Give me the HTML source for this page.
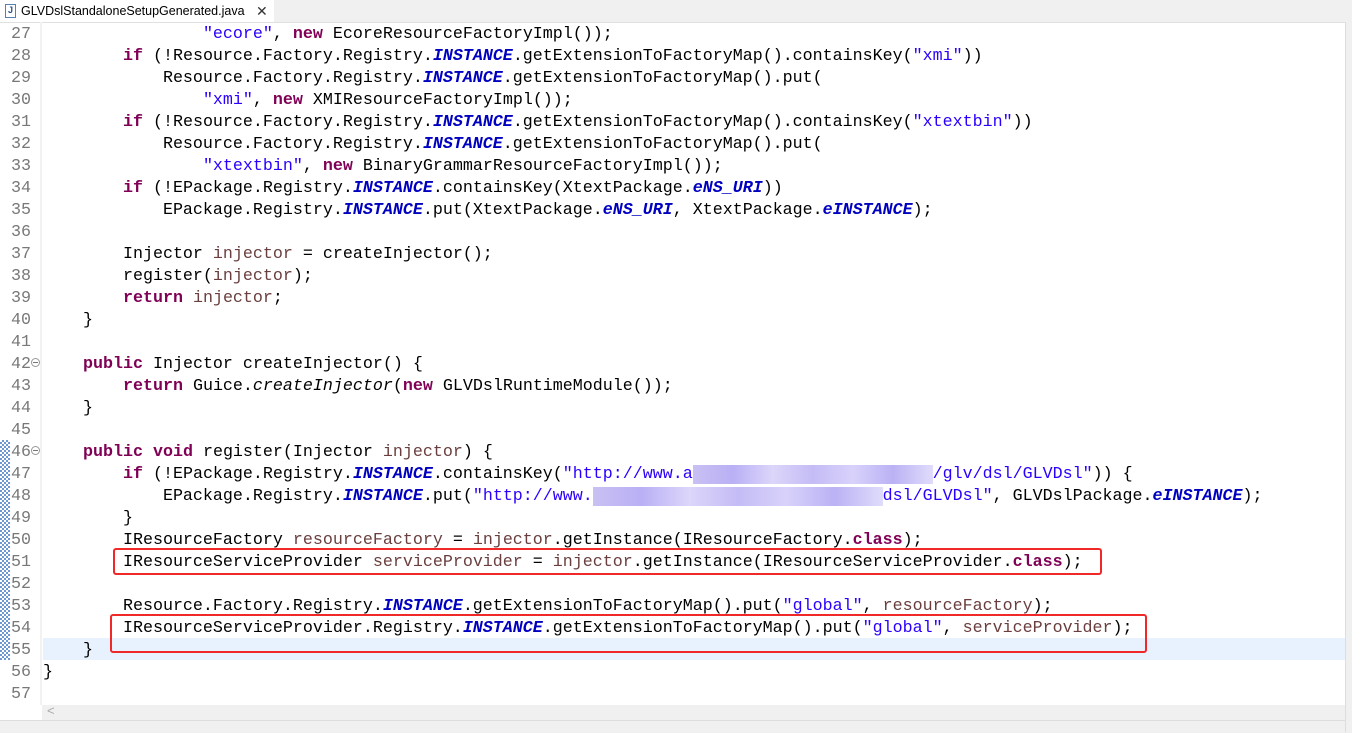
<!DOCTYPE html>
<html><head><meta charset="utf-8"><style>
html,body{margin:0;padding:0;width:1352px;height:732px;overflow:hidden;background:#fff;font-family:"Liberation Sans",sans-serif}
#tabbar{position:absolute;left:0;top:0;width:1352px;height:22px;background:#f0f0f0;border-bottom:1px solid #e0e0e0}
#tab{position:absolute;left:0;top:0;width:274px;height:22px;background:#fff;font-size:12.5px;line-height:20px;color:#000}
#tab .ic{position:absolute;left:5px;top:4px;width:9px;height:12px;border:1px solid #5a7fae;background:#fff;font-size:9px;line-height:11px;text-align:center;color:#2a5090;font-weight:bold}
#tab .t{position:absolute;left:21px;top:1px}
#tab .x{position:absolute;left:256px;top:1px;font-size:14px;color:#333}
#ruler{position:absolute;left:0;top:440px;width:10px;height:220px;background-image:repeating-conic-gradient(#6f97d2 0 25%,#fff 0 50%);background-size:4px 4px}
#gsep{position:absolute;left:40px;top:22px;width:2px;height:683px;background:#f2f2f2}
pre{margin:0;font-family:"Liberation Mono",monospace;font-size:16.67px;line-height:22px}
#nums{position:absolute;left:11px;top:24px;color:#787878}
#code{position:absolute;left:43px;top:24px;color:#000}
.k{color:#7f0055;font-weight:bold}.s{color:#2a00ff}.f{color:#0000c0;font-weight:bold;font-style:italic}.v{color:#6a3e3e}.i{font-style:italic}
.blur{color:transparent;background:linear-gradient(90deg,#c9c0f3,#b9b0f5,#dcd6fa,#c4bcf5,#d8d2fb,#bab2f4,#e0dcfb)}
#hl{position:absolute;left:43px;top:638px;width:1302px;height:22px;background:#e8f2fe}
.box{position:absolute;border:2px solid #f02828;border-radius:3px}
.fold{position:absolute;left:31px;width:7px;height:7px;border:1px solid #999;border-radius:50%;background:#fff}
.fold:after{content:"";position:absolute;left:1px;top:3px;width:5px;height:1px;background:#777}
#hscroll{position:absolute;left:42px;top:705px;width:1303px;height:15px;background:#f0f0f0}
#hscroll span{position:absolute;left:5px;top:-2px;color:#aaa;font-size:13px}
#bottom{position:absolute;left:0;top:720px;width:1352px;height:12px;background:#f0f0f0;border-top:1px solid #ddd}
#vline{position:absolute;left:1345px;top:22px;width:7px;height:710px;background:#f0f0f0;border-left:1px solid #ddd}
</style></head><body>
<div id="tabbar"><div id="tab"><div class="ic">J</div><div class="t">GLVDslStandaloneSetupGenerated.java</div><div class="x">✕</div></div></div>
<div id="ruler"></div><div id="gsep"></div>
<div id="hl"></div>
<pre id="nums">27
28
29
30
31
32
33
34
35
36
37
38
39
40
41
42
43
44
45
46
47
48
49
50
51
52
53
54
55
56
57</pre>
<div class="fold" style="top:358px"></div><div class="fold" style="top:446px"></div>
<pre id="code">                <span class="s">"ecore"</span>, <span class="k">new</span> EcoreResourceFactoryImpl());
        <span class="k">if</span> (!Resource.Factory.Registry.<span class="f">INSTANCE</span>.getExtensionToFactoryMap().containsKey(<span class="s">"xmi"</span>))
            Resource.Factory.Registry.<span class="f">INSTANCE</span>.getExtensionToFactoryMap().put(
                <span class="s">"xmi"</span>, <span class="k">new</span> XMIResourceFactoryImpl());
        <span class="k">if</span> (!Resource.Factory.Registry.<span class="f">INSTANCE</span>.getExtensionToFactoryMap().containsKey(<span class="s">"xtextbin"</span>))
            Resource.Factory.Registry.<span class="f">INSTANCE</span>.getExtensionToFactoryMap().put(
                <span class="s">"xtextbin"</span>, <span class="k">new</span> BinaryGrammarResourceFactoryImpl());
        <span class="k">if</span> (!EPackage.Registry.<span class="f">INSTANCE</span>.containsKey(XtextPackage.<span class="f">eNS_URI</span>))
            EPackage.Registry.<span class="f">INSTANCE</span>.put(XtextPackage.<span class="f">eNS_URI</span>, XtextPackage.<span class="f">eINSTANCE</span>);

        Injector <span class="v">injector</span> = createInjector();
        register(<span class="v">injector</span>);
        <span class="k">return</span> <span class="v">injector</span>;
    }

    <span class="k">public</span> Injector createInjector() {
        <span class="k">return</span> Guice.<span class="i">createInjector</span>(<span class="k">new</span> GLVDslRuntimeModule());
    }

    <span class="k">public</span> <span class="k">void</span> register(Injector <span class="v">injector</span>) {
        <span class="k">if</span> (!EPackage.Registry.<span class="f">INSTANCE</span>.containsKey(<span class="s">"http://www.a</span><span class="blur">xxxxxxxxxxxxxxxxxxxxxxxx</span><span class="s">/glv/dsl/GLVDsl"</span>)) {
            EPackage.Registry.<span class="f">INSTANCE</span>.put(<span class="s">"http://www.</span><span class="blur">xxxxxxxxxxxxxxxxxxxxxxxxxxxxx</span><span class="s">dsl/GLVDsl"</span>, GLVDslPackage.<span class="f">eINSTANCE</span>);
        }
        IResourceFactory <span class="v">resourceFactory</span> = <span class="v">injector</span>.getInstance(IResourceFactory.<span class="k">class</span>);
        IResourceServiceProvider <span class="v">serviceProvider</span> = <span class="v">injector</span>.getInstance(IResourceServiceProvider.<span class="k">class</span>);

        Resource.Factory.Registry.<span class="f">INSTANCE</span>.getExtensionToFactoryMap().put(<span class="s">"global"</span>, <span class="v">resourceFactory</span>);
        IResourceServiceProvider.Registry.<span class="f">INSTANCE</span>.getExtensionToFactoryMap().put(<span class="s">"global"</span>, <span class="v">serviceProvider</span>);
    }
}
</pre>
<div class="box" style="left:113px;top:548px;width:985px;height:23px"></div>
<div class="box" style="left:110px;top:614px;width:1033px;height:35px"></div>
<div id="hscroll"><span>&lt;</span></div>
<div id="bottom"></div>
<div id="vline"></div>
</body></html>
